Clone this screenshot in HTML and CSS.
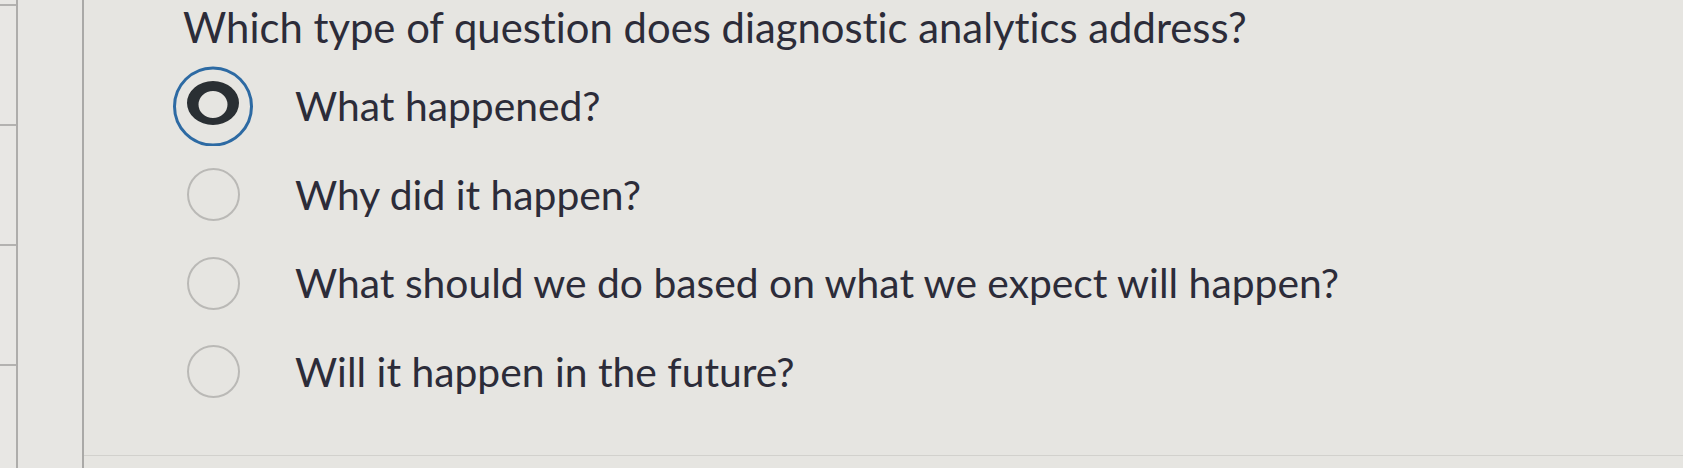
FILE: index.html
```html
<!DOCTYPE html>
<html lang="en">
<head>
<meta charset="utf-8">
<title>Quiz question</title>
<link rel="stylesheet" href="styles.css">
</head>
<body>
<div class="page">
  <div class="rail-a">
    <div class="rail-cell"></div>
    <div class="rail-cell"></div>
    <div class="rail-cell"></div>
    <div class="rail-cell"></div>
  </div>
  <div class="rail-b"></div>
  <main class="main">
    <h1 class="question">Which type of question does diagnostic analytics address?</h1>
    <div class="options">
      <label class="option">
        <span class="radio-slot">
          <svg class="radio-selected" width="80" height="80" viewBox="0 0 80 80">
            <circle cx="40" cy="40.5" r="38.5" fill="none" stroke="#2d6aa3" stroke-width="3"/>
            <path fill="#2a2f33" fill-rule="evenodd" d="M14 37a26 22 0 1 0 52 0a26 22 0 1 0 -52 0z M25.5 38.5a14.5 13.5 0 1 0 29 0a14.5 13.5 0 1 0 -29 0z"/>
          </svg>
        </span>
        <span class="option-text">What happened?</span>
      </label>
      <label class="option">
        <span class="radio-slot"><span class="radio"></span></span>
        <span class="option-text">Why did it happen?</span>
      </label>
      <label class="option">
        <span class="radio-slot"><span class="radio"></span></span>
        <span class="option-text">What should we do based on what we expect will happen?</span>
      </label>
      <label class="option">
        <span class="radio-slot"><span class="radio"></span></span>
        <span class="option-text">Will it happen in the future?</span>
      </label>
    </div>
  </main>
</div>
</body>
</html>
```
FILE: styles.css
```css
html, body {
  margin: 0;
  padding: 0;
}

body {
  background: #e6e5e1;
  font-family: Lato, "Open Sans", sans-serif;
  font-variant-ligatures: none;
  color: #2c2c39;
  overflow: hidden;
}

.page {
  display: flex;
  height: 468px;
}

.rail-a {
  width: 16px;
  padding-top: 4px;
  border-right: 2px solid #aeadab;
  overflow: hidden;
  background: #e8e7e4;
}

.rail-cell {
  height: 118px;
  border-top: 2px solid #b3b2b0;
}

.rail-b {
  width: 64px;
  border-right: 2px solid #aaa9a7;
  background: #e7e6e3;
}

.main {
  flex: 1;
  height: 455px;
  padding-left: 89px;
  border-bottom: 1px solid #d2d1cd;
}

.question {
  margin: 3px 0 0 10px;
  font-size: 41.8px;
  line-height: 48px;
  font-weight: 400;
  letter-spacing: 0;
}

.options {
  display: flex;
  flex-direction: column;
  margin-top: 11px;
}

.option {
  display: flex;
  align-items: center;
  height: 88.5px;
}

.radio-slot {
  width: 80px;
  height: 80px;
  margin-right: 42px;
  display: flex;
  align-items: center;
  justify-content: center;
  flex: none;
}

.radio-selected {
  display: block;
}

.radio {
  width: 49px;
  height: 49px;
  border: 2px solid #bab9b6;
  border-radius: 50%;
}

.option-text {
  font-size: 40.8px;
  line-height: 48px;
}
```
